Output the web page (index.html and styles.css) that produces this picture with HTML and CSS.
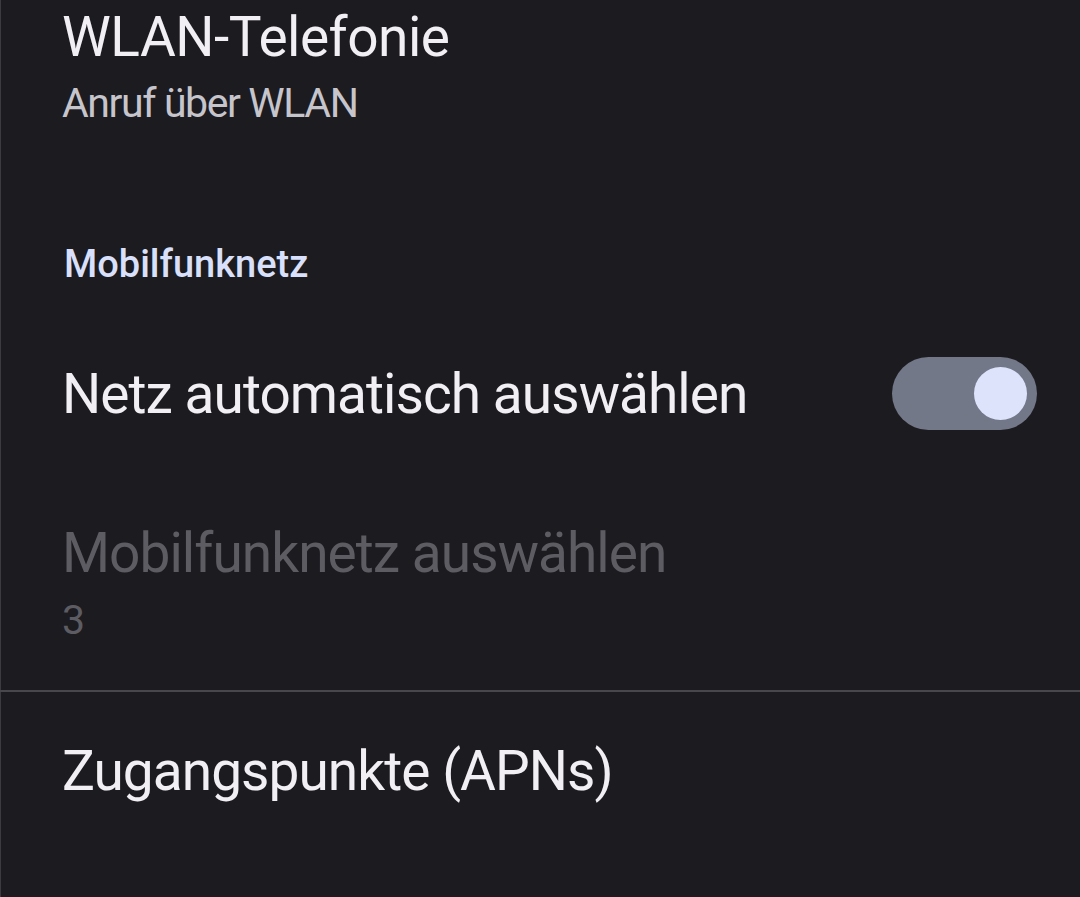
FILE: index.html
```html
<!DOCTYPE html>
<html lang="de">
<head>
<meta charset="utf-8">
<title>Mobilfunknetz</title>
<link rel="stylesheet" href="styles.css">
</head>
<body>
<div class="page">
  <div class="item item-first">
    <div class="title">WLAN-Telefonie</div>
    <div class="summary">Anruf über WLAN</div>
  </div>
  <div class="category">Mobilfunknetz</div>
  <div class="item item-switch">
    <div class="title">Netz automatisch auswählen</div>
    <div class="switch" role="switch" aria-checked="true"><span class="thumb"></span></div>
  </div>
  <div class="item item-disabled">
    <div class="title">Mobilfunknetz auswählen</div>
    <div class="summary">3</div>
  </div>
  <div class="divider"></div>
  <div class="item item-apn">
    <div class="title">Zugangspunkte (APNs)</div>
  </div>
</div>
</body>
</html>
```

FILE: styles.css
```css
html, body {
  margin: 0;
  padding: 0;
  background: #1c1b20;
}
body {
  font-family: Roboto, "Open Sans", sans-serif;
  width: 1080px;
  height: 897px;
  overflow: hidden;
}
.page {
  box-sizing: border-box;
  height: 897px;
  border-left: 1px solid #3c3b40;
  padding-top: 5px;
}
.item {
  padding-left: 61px;
  padding-right: 43px;
}
.title {
  font-size: 55px;
  line-height: 64px;
  letter-spacing: -0.95px;
  color: #f2eff4;
  white-space: nowrap;
}
.item-first .title {
  letter-spacing: -0.5px;
}
.summary {
  font-size: 41px;
  line-height: 48px;
  letter-spacing: -1.4px;
  color: #c6c5cc;
  margin-top: 10px;
}
.category {
  padding-left: 63px;
  margin-top: 115px;
  font-size: 38px;
  line-height: 44px;
  font-weight: 500;
  color: #d9e0fb;
}
.item-switch {
  margin-top: 71px;
  display: flex;
  align-items: center;
  justify-content: space-between;
  height: 73px;
}
.switch {
  position: relative;
  width: 145px;
  height: 73px;
  border-radius: 37px;
  background: #737889;
  flex: none;
}
.thumb {
  position: absolute;
  right: 10px;
  top: 10px;
  width: 53px;
  height: 53px;
  border-radius: 50%;
  background: #dde3fb;
}
.item-disabled {
  margin-top: 91px;
}
.item-disabled .title,
.item-disabled .summary {
  color: #5d5c62;
}
.item-disabled .summary {
  margin-top: 11px;
}
.divider {
  margin-top: 46px;
  margin-left: -1px;
  height: 2px;
  background: #48474c;
}
.item-apn {
  margin-top: 47px;
}
```
